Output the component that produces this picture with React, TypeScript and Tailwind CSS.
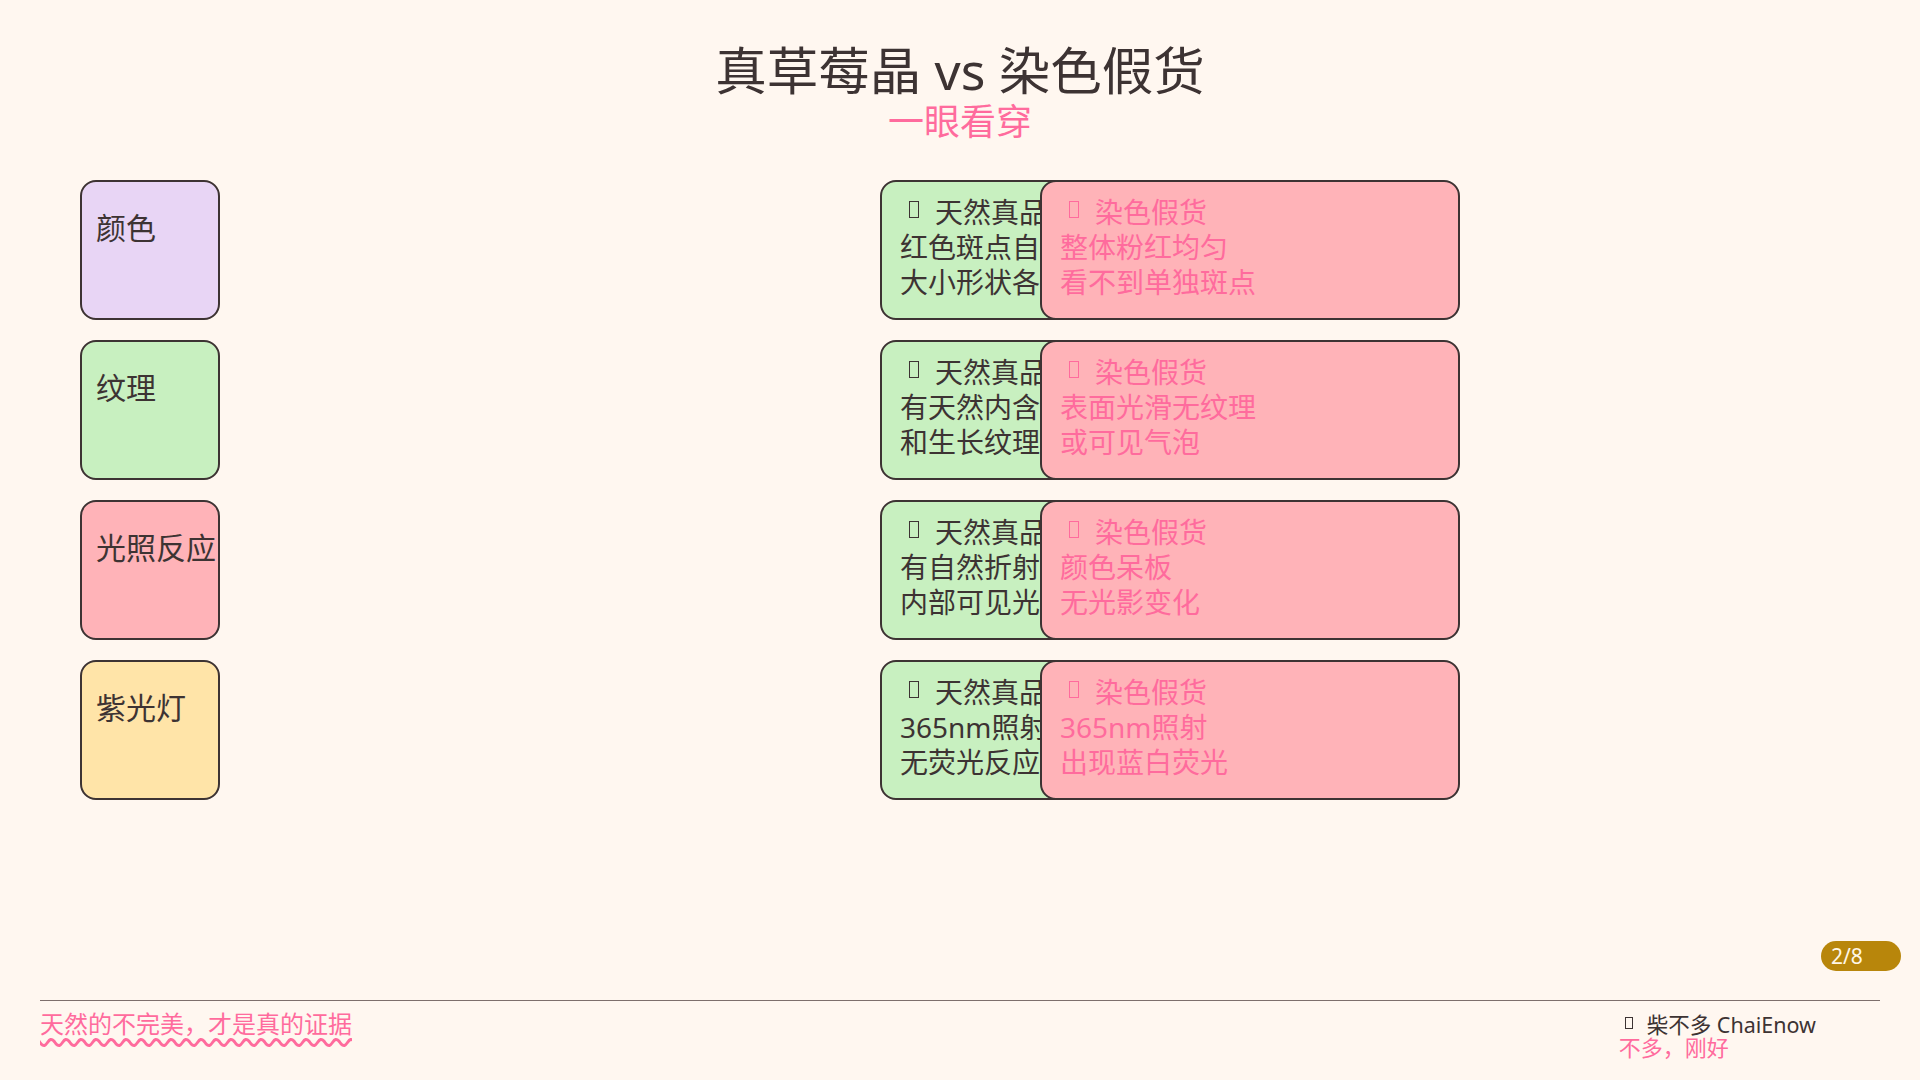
import React from "react";

type Row = {
  label: string;
  labelBg: string;
  real: [string, string];
  fake: [string, string];
};

const rows: Row[] = [
  {
    label: "颜色",
    labelBg: "bg-[#e8d5f5]",
    real: ["红色斑点自然分布", "大小形状各异"],
    fake: ["整体粉红均匀", "看不到单独斑点"],
  },
  {
    label: "纹理",
    labelBg: "bg-[#c8f0c0]",
    real: ["有天然内含物", "和生长纹理"],
    fake: ["表面光滑无纹理", "或可见气泡"],
  },
  {
    label: "光照反应",
    labelBg: "bg-[#ffb3b8]",
    real: ["有自然折射光泽", "内部可见光影变化"],
    fake: ["颜色呆板", "无光影变化"],
  },
  {
    label: "紫光灯",
    labelBg: "bg-[#ffe4a8]",
    real: ["365nm照射", "无荧光反应"],
    fake: ["365nm照射", "出现蓝白荧光"],
  },
];

function Tofu({ color }: { color: "dark" | "pink" }) {
  return (
    <span
      className={`inline-block ml-[9px] mr-[16px] w-[10px] h-[17px] border-[1.5px] align-[5px] ${
        color === "dark" ? "border-[#3d3333]" : "border-[#ff6b9d]"
      }`}
    />
  );
}

export default function App() {
  return (
    <div className="relative w-[1920px] h-[1080px] overflow-hidden bg-[#fff7f0] text-[#3d3333] font-['Noto_Sans','Noto_Sans_CJK_SC',sans-serif] flex flex-col">
      {/* Header */}
      <div className="pt-[41px] flex flex-col items-center">
        <h1 className="text-[51.5px] leading-[59px] font-normal text-[#3d3333]">
          真草莓晶 vs 染色假货
        </h1>
        <div className="text-[36px] leading-[43px] text-[#ff6b9d]">一眼看穿</div>
      </div>

      {/* Rows */}
      <div className="mt-[37px] pl-[80px] flex flex-col gap-[20px]">
        {rows.map((r, i) => (
          <div key={i} className="flex items-stretch h-[140px]">
            <div
              className={`w-[140px] h-[140px] shrink-0 rounded-2xl border-2 border-[#3d3333] ${r.labelBg} pl-[14px] pt-[28px] text-[30px] leading-[36px] whitespace-nowrap`}
            >
              {r.label}
            </div>
            <div className="ml-[660px] w-[200px] h-[140px] shrink-0 rounded-2xl border-2 border-[#3d3333] bg-[#c8f0c0] px-[18px] pt-[12.5px] text-[28px] leading-[35px] whitespace-nowrap overflow-hidden">
              <div>
                <Tofu color="dark" />
                天然真品
              </div>
              <div>{r.real[0]}</div>
              <div>{r.real[1]}</div>
            </div>
            <div className="relative z-10 -ml-[40px] w-[420px] h-[140px] shrink-0 rounded-2xl border-2 border-[#3d3333] bg-[#ffb3b8] px-[18px] pt-[12.5px] text-[28px] leading-[35px] text-[#ff6b9d] whitespace-nowrap">
              <div>
                <Tofu color="pink" />
                染色假货
              </div>
              <div>{r.fake[0]}</div>
              <div>{r.fake[1]}</div>
            </div>
          </div>
        ))}
      </div>

      <div className="flex-1" />

      {/* Footer */}
      <div className="mx-[40px] h-[80px] border-t border-[#7d6f6c] flex justify-between items-start">
        <div className="pt-[5px] text-[24px] leading-[36px] text-[#ff6b9d] underline decoration-wavy decoration-[#ff6b9d] decoration-[3px] underline-offset-[5px]">
          天然的不完美，才是真的证据
        </div>
        <div className="pt-[12px] mr-[64px] flex flex-col">
          <div className="text-[21.5px] leading-[23px] text-[#3d3333]">
            <span className="inline-block ml-[6px] mr-[14px] w-[8px] h-[12px] border border-[#3d3333] align-[4px]" />
            柴不多 ChaiEnow
          </div>
          <div className="text-[22px] leading-[22px] text-[#ff6b9d]">不多，刚好</div>
        </div>
      </div>

      {/* Page badge */}
      <div className="absolute right-[19px] bottom-[109px] w-[80px] h-[30px] rounded-full bg-[#b8860b] pl-[10px] text-[21px] leading-[30px] text-[#fff7e6]">
        2/8
      </div>
    </div>
  );
}
